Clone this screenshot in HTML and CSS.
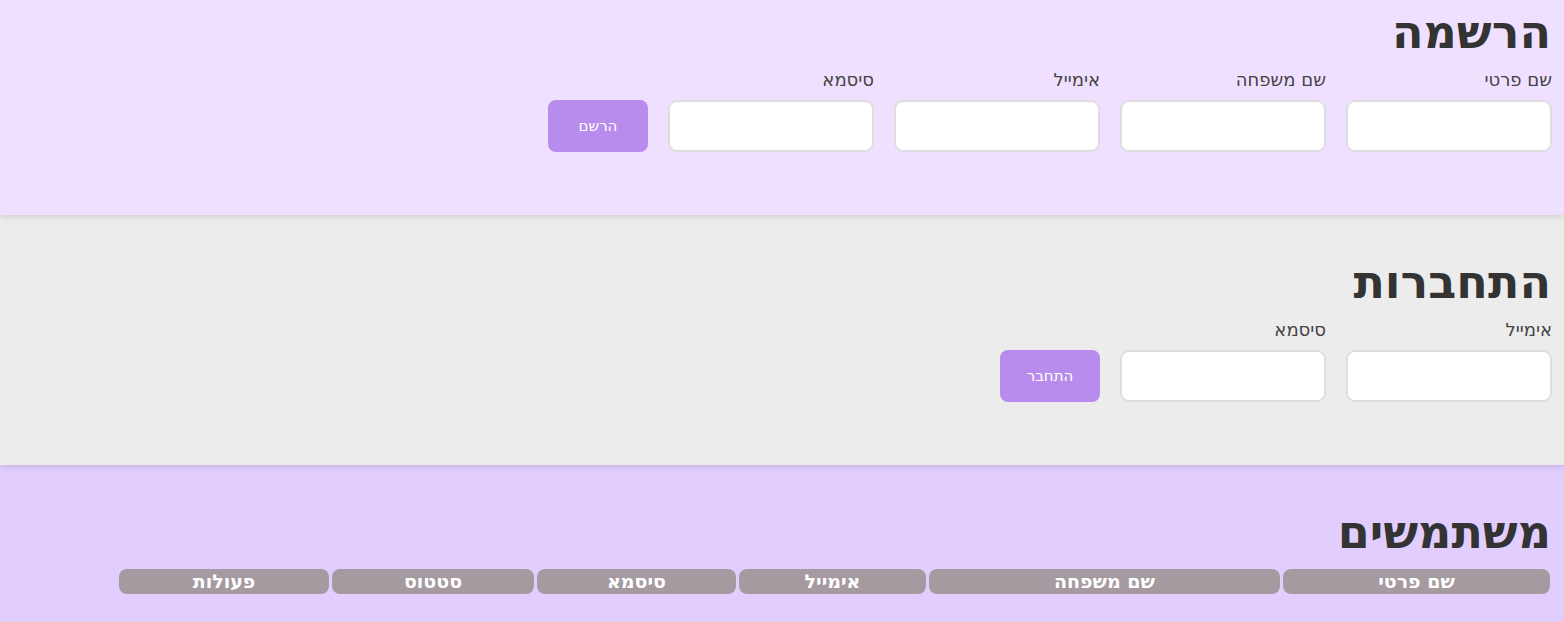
FILE: index.html
```html
<!DOCTYPE html>
<html lang="he" dir="rtl">
<head>
<meta charset="utf-8">
<title>משתמשים</title>
<link rel="stylesheet" href="styles.css">
</head>
<body>
<section class="panel panel-register">
  <h1 class="panel-title">הרשמה</h1>
  <form class="form-row">
    <div class="field">
      <label class="field-label">שם פרטי</label>
      <input class="field-input" type="text">
    </div>
    <div class="field">
      <label class="field-label">שם משפחה</label>
      <input class="field-input" type="text">
    </div>
    <div class="field">
      <label class="field-label">אימייל</label>
      <input class="field-input" type="email">
    </div>
    <div class="field">
      <label class="field-label">סיסמא</label>
      <input class="field-input" type="password">
    </div>
    <button class="btn" type="button">הרשם</button>
  </form>
</section>
<section class="panel panel-login">
  <h1 class="panel-title">התחברות</h1>
  <form class="form-row">
    <div class="field">
      <label class="field-label">אימייל</label>
      <input class="field-input" type="email">
    </div>
    <div class="field">
      <label class="field-label">סיסמא</label>
      <input class="field-input" type="password">
    </div>
    <button class="btn" type="button">התחבר</button>
  </form>
</section>
<section class="panel panel-users">
  <h1 class="panel-title">משתמשים</h1>
  <table class="users-table">
    <thead>
      <tr>
        <th class="col-first">שם פרטי</th>
        <th class="col-last">שם משפחה</th>
        <th class="col-email">אימייל</th>
        <th class="col-pass">סיסמא</th>
        <th class="col-status">סטטוס</th>
        <th class="col-actions">פעולות</th>
      </tr>
    </thead>
  </table>
</section>
</body>
</html>
```
FILE: styles.css
```css
* { box-sizing: border-box; }
html, body {
  margin: 0;
  padding: 0;
}
body {
  font-family: "DejaVu Sans", sans-serif;
  background: #ececec;
  height: 622px;
  overflow: hidden;
}
.panel {
  position: relative;
  padding: 42px 12px 63px;
}
.panel-register {
  background: #f0e0ff;
  padding-top: 7px;
  z-index: 3;
  box-shadow: 0 2px 6px rgba(0, 0, 0, 0.12);
}
.panel-login {
  background: #ececec;
  z-index: 2;
  box-shadow: 0 2px 6px rgba(0, 0, 0, 0.12);
}
.panel-users {
  background: #e2cdff;
  z-index: 1;
  min-height: 160px;
}
.panel-title {
  margin: 0 1px 0 0;
  font-size: 46px;
  line-height: 50px;
  font-weight: bold;
  color: #333;
}
.form-row {
  display: flex;
  align-items: flex-end;
  gap: 20px;
  margin-top: 13px;
}
.field {
  display: flex;
  flex-direction: column;
}
.field-label {
  font-size: 18px;
  line-height: 20px;
  color: #444;
  margin-bottom: 10px;
}
.field-input {
  width: 206px;
  height: 52px;
  border: 2px solid #e0dde0;
  border-radius: 9px;
  background: #fff;
  font: inherit;
}
.btn {
  width: 100px;
  height: 52px;
  border: none;
  border-radius: 8px;
  background: #b88cec;
  color: #fff;
  font-family: "DejaVu Sans", sans-serif;
  font-size: 15px;
}
.users-table {
  margin-top: 9px;
  margin-right: -1px;
  border-spacing: 3px;
}
.users-table th {
  height: 25px;
  padding: 0;
  background: #a59a9f;
  color: #fff;
  font-size: 19px;
  line-height: 25px;
  font-weight: bold;
  border-radius: 8px;
  text-align: center;
}
.col-first { width: 267px; }
.col-last { width: 351px; }
.col-email { width: 187px; }
.col-pass { width: 199px; }
.col-status { width: 202px; }
.col-actions { width: 210px; }
```
